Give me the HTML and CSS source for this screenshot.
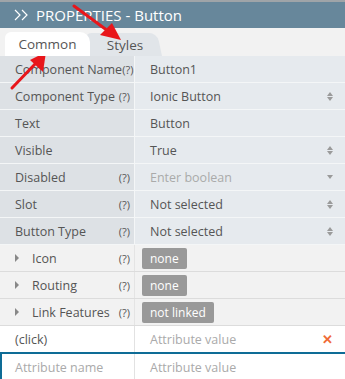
FILE: index.html
```html
<!DOCTYPE html>
<html>
<head>
<link rel="stylesheet" href="styles.css">
</head>
<body>

<div class="panel">
  <div class="topStrip"></div>
  <div class="header">
    <svg class="chev" width="14" height="12" viewBox="0 0 14 12">
      <polyline points="1,1 6,6 1,11" fill="none" stroke="#fff" stroke-width="1.2"/>
      <polyline points="8,1 13,6 8,11" fill="none" stroke="#fff" stroke-width="1.2"/>
    </svg>
    PROPERTIES - Button
  </div>

  <div class="tabs">
    <div class="tab tabActive">Common</div>
    <div class="tab tabStyles">Styles</div>
  </div>

  <div class="props">
    <div class="row">
      <div class="name">Component Name<span class="help tight">(?)</span></div>
      <div class="value">Button1</div>
    </div>
    <div class="row">
      <div class="name">Component Type<span class="help">(?)</span></div>
      <div class="value">Ionic Button<span class="updown"></span></div>
    </div>
    <div class="row">
      <div class="name">Text</div>
      <div class="value">Button</div>
    </div>
    <div class="row">
      <div class="name">Visible</div>
      <div class="value">True<span class="updown"></span></div>
    </div>
    <div class="row">
      <div class="name">Disabled<span class="help">(?)</span></div>
      <div class="value placeholder">Enter boolean<span class="down"></span></div>
    </div>
    <div class="row">
      <div class="name">Slot<span class="help">(?)</span></div>
      <div class="value">Not selected<span class="updown"></span></div>
    </div>
    <div class="row">
      <div class="name">Button Type<span class="help">(?)</span></div>
      <div class="value">Not selected<span class="updown"></span></div>
    </div>

    <div class="row group">
      <div class="name"><span class="caret"></span>Icon<span class="help">(?)</span></div>
      <div class="value"><span class="badge">none</span></div>
    </div>
    <div class="row group">
      <div class="name"><span class="caret"></span>Routing<span class="help">(?)</span></div>
      <div class="value"><span class="badge">none</span></div>
    </div>
    <div class="row group">
      <div class="name"><span class="caret"></span>Link Features<span class="help">(?)</span></div>
      <div class="value"><span class="badge">not linked</span></div>
    </div>

    <div class="row attr">
      <div class="name">(click)</div>
      <div class="value placeholder">Attribute value<span class="remove">&#x2715;</span></div>
    </div>
    <div class="row attr attrNew">
      <div class="name placeholder focused">Attribute name</div>
      <div class="value placeholder">Attribute value</div>
    </div>
  </div>

  <!-- annotation arrows -->
  <svg class="arrows" width="345" height="379" viewBox="0 0 345 379">
    <line x1="74" y1="6" x2="108" y2="31" stroke="#e8161b" stroke-width="3" stroke-linecap="round"/>
    <polygon points="121,40 100,35 112,23" fill="#e8161b"/>
    <line x1="12" y1="88" x2="37" y2="62" stroke="#e8161b" stroke-width="3" stroke-linecap="round"/>
    <polygon points="46,52 43,72 30,60" fill="#e8161b"/>
  </svg>
</div>

</body>
</html>
```

FILE: styles.css
```css
body {
  margin: 0;
  font-family: "Open Sans", "Noto Sans", sans-serif;
  font-size: 12.5px;
  color: #555;
}

.panel {
  position: relative;
  width: 345px;
  height: 379px;
  overflow: hidden;
  background-color: #f2f2f2;
}

.topStrip {
  height: 2px;
  background-color: #9fa4a8;
}

.header {
  display: flex;
  align-items: center;
  height: 26px;
  padding-left: 14px;
  background-color: #67879b;
  color: #fff;
  font-size: 15px;
  white-space: nowrap;
}

.chev {
  margin-right: 8px;
}

/* 分頁 */
.tabs {
  display: flex;
  align-items: flex-end;
  height: 28px;
  padding-left: 5px;
  background-color: #f2f2f2;
}

.tab {
  position: relative;
  height: 23px;
  line-height: 25px;
  font-size: 13.5px;
  text-align: center;
}

.tabActive {
  width: 85px;
  height: 24px;
  background-color: #fff;
  border-radius: 6px 10px 0 0;
  z-index: 1;
}

.tabStyles {
  width: 66px;
  margin-left: 2px;
  padding-right: 4px;
  z-index: 0;
}

.tabStyles::before {
  content: "";
  position: absolute;
  top: 0;
  left: -2px;
  right: 0;
  bottom: 0;
  background-color: #e1e5e9;
  border-radius: 6px 8px 0 0;
  transform: skewX(12deg);
  transform-origin: bottom;
  z-index: -1;
}

/* 屬性表 */
.row {
  display: flex;
  height: 26px;
  border-bottom: 1px solid #f4f6f7;
  white-space: nowrap;
}

.name {
  width: 119px;
  padding-left: 15px;
  display: flex;
  align-items: center;
  background-color: #dde1e5;
  border-right: 1px solid #f4f6f7;
}

.value {
  flex: 1;
  display: flex;
  align-items: center;
  padding-left: 15px;
  padding-right: 12px;
  background-color: #e6eaee;
}

.help {
  margin-left: auto;
  margin-right: 4px;
  font-size: 11px;
}

.help.tight {
  margin-left: 0;
}

.placeholder {
  color: #aaa;
}

.updown,
.down {
  margin-left: auto;
  display: flex;
  flex-direction: column;
  gap: 1px;
}

.updown::before {
  content: "";
  border-left: 3px solid transparent;
  border-right: 3px solid transparent;
  border-bottom: 4px solid #9a9a9a;
}

.updown::after,
.down::after {
  content: "";
  border-left: 3px solid transparent;
  border-right: 3px solid transparent;
  border-top: 4px solid #9a9a9a;
}

.group {
  border-bottom: 1px solid #dcdcdc;
}

.group .name,
.group .value {
  background-color: #f2f2f2;
}

.group .name {
  border-right: 1px solid #e4e4e4;
}

.group .value {
  padding-left: 7px;
}

.caret {
  width: 0;
  height: 0;
  border-top: 4px solid transparent;
  border-bottom: 4px solid transparent;
  border-left: 4px solid #888;
  margin-right: 13px;
}

.badge {
  background-color: #999;
  color: #fff;
  font-size: 12px;
  padding: 0 8px;
  height: 21px;
  line-height: 21px;
  border-radius: 2px;
}

.attr .name,
.attr .value {
  background-color: #fff;
}

.attr .name {
  border-right: 1px solid #e2e2e2;
}

.attr {
  border-bottom: 1px solid #e2e2e2;
}

.attrNew {
  border-top: 2px solid #0e6c96;
  margin-top: -1px;
}

.focused {
  border-left: 2px solid #0e6c96;
  padding-left: 13px;
}

.remove {
  margin-left: auto;
  color: #f06a35;
  font-size: 13px;
  font-weight: bold;
}

.arrows {
  position: absolute;
  top: 0;
  left: 0;
  pointer-events: none;
}
```
